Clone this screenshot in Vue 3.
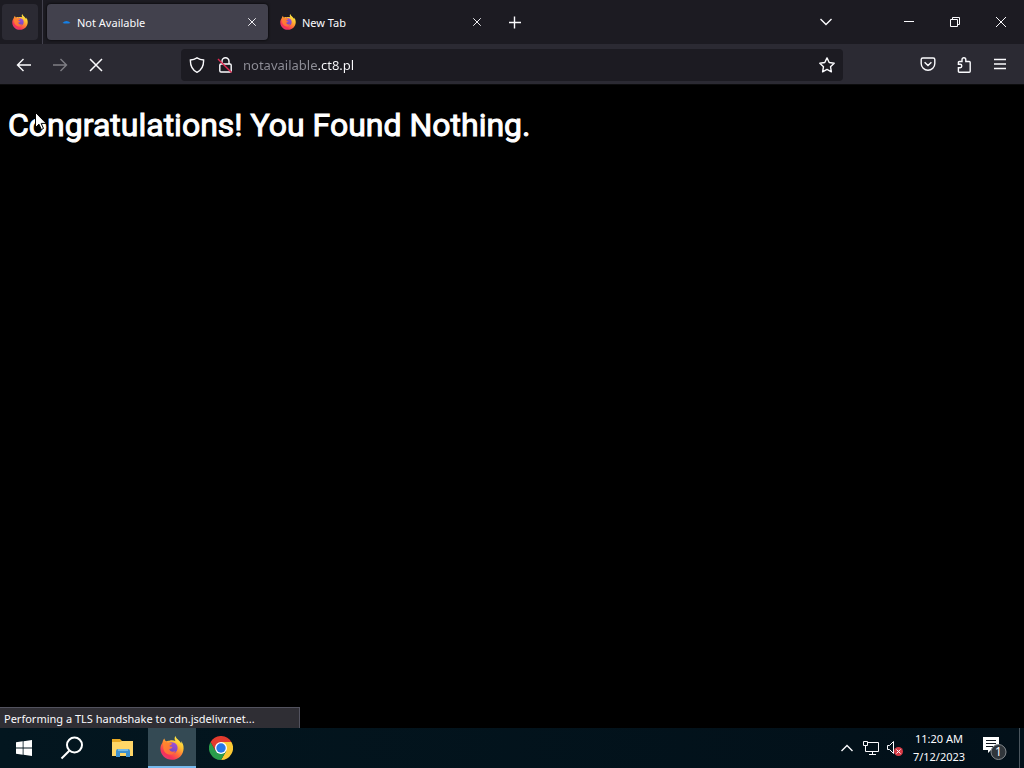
<script setup>
import { ref } from 'vue'

const address = ref('notavailable.ct8.pl')
</script>

<template>
  <div class="desktop">
    <svg class="defs" aria-hidden="true">
      <defs>
        <linearGradient id="ff-body" x1="0.85" y1="0.1" x2="0.25" y2="0.95">
          <stop offset="0" stop-color="#fff04a" />
          <stop offset="0.3" stop-color="#ffbd30" />
          <stop offset="0.58" stop-color="#ff7139" />
          <stop offset="0.85" stop-color="#f5315a" />
          <stop offset="1" stop-color="#e93a6c" />
        </linearGradient>
        <linearGradient id="ff-globe" x1="0.7" y1="0" x2="0.3" y2="1">
          <stop offset="0" stop-color="#a050d8" />
          <stop offset="1" stop-color="#6a48bd" />
        </linearGradient>
        <linearGradient id="ff-fox" x1="0" y1="0" x2="0.7" y2="1">
          <stop offset="0" stop-color="#ff8a2c" />
          <stop offset="1" stop-color="#ff6a3c" />
        </linearGradient>
        <symbol id="firefox" viewBox="0 0 24 24">
          <path fill="url(#ff-body)" d="M15.300 0c-1 2-.9 3.600.2 5-1.900-.7-4-.9-6-.3C8 4.500 7 4.800 6.200 5.300 5 4.700 4.500 3.500 4.500 2.600 3.300 3.600 2.700 5 2.600 6.400 1.100 8.300.3 10.600.4 13c.2 6.100 5.200 10.800 11.600 10.800 6.300 0 11.500-4.900 11.600-11.400.1-3-1-5.700-2.600-7.300.3 1 .4 1.800.3 2.500C19.800 4.400 16.500 3.300 15.300 0z" />
          <path fill="url(#ff-globe)" d="M8.500 7c2.800-1.500 6.200-.8 8 1.500 1.800 2.600 1.200 6-1 7.900-2.300 1.700-6 1.300-7.900-1-1.700-2.300-1.500-6 .9-8.400z" />
          <path fill="url(#ff-fox)" d="M2.600 6.400c2-.8 4.300-.5 5.900.6 1.100-.3 2.500-.2 3.600.4-.5 1.600-1.900 1.700-2.700 2.300.2 1 1.500 1.200 3.200 1-.6 1.700-2 2-3.300 2.200.5 2.600 3.500 3.700 6.200 2-1 3.300-4.800 4.600-8 3.100C4.200 16.600 3 13 3.400 10.200z" />
        </symbol>
        <symbol id="cross" viewBox="0 0 16 16">
          <path d="M2 2l12 12M14 2L2 14" fill="none" stroke="currentColor" stroke-width="1.500" />
        </symbol>
      </defs>
    </svg>

    <header class="tabs">
      <button class="pinned" aria-label="Firefox View"><svg class="i16"><use href="#firefox" /></svg></button>
      <div class="tab active">
        <svg class="i16" viewBox="0 0 16 16"><path d="M7.500 9Q11.500 5 15.500 9Q11.500 10 7.500 9z" fill="#1480e8" /></svg>
        <span class="title">Not Available</span>
        <button class="close" aria-label="Close Not Available"><svg class="i10"><use href="#cross" /></svg></button>
      </div>
      <div class="tab">
        <svg class="i16"><use href="#firefox" /></svg>
        <span class="title">New Tab</span>
        <button class="close" aria-label="Close New Tab"><svg class="i10"><use href="#cross" /></svg></button>
      </div>
      <button class="tool" aria-label="Open a new tab">
        <svg class="i16 line" viewBox="0 0 16 16"><path d="M7.500 2.500v12M2 8.500h12" /></svg>
      </button>
      <button class="tool list" aria-label="List all tabs">
        <svg class="i16 line" viewBox="0 0 16 16"><path d="M2.500 5L8 10.500 13.500 5" /></svg>
      </button>
      <div class="window">
        <button aria-label="Minimize"><svg class="i10 thin" viewBox="0 0 10 10"><path d="M0 4.500h10" /></svg></button>
        <button aria-label="Restore"><svg class="i10 thin" viewBox="0 0 10 10"><path d="M.5 2.500h7v7h-7zM2.500 2.500v-2h7v7h-2" /></svg></button>
        <button aria-label="Close"><svg class="i10 thin" viewBox="0 0 10 10"><path d="M0 0l10 10M10 0L0 10" /></svg></button>
      </div>
    </header>

    <nav class="toolbar">
      <div class="group">
        <button class="tool" aria-label="Back"><svg class="i16 line" viewBox="0 0 16 16"><path d="M15 8H1.500M7.500 2L1.500 8l6 6" /></svg></button>
        <button class="tool" aria-label="Forward" disabled><svg class="i16 line" viewBox="0 0 16 16"><path d="M1 8h13.500M8.500 2l6 6-6 6" /></svg></button>
        <button class="tool" aria-label="Stop"><svg class="i16"><use href="#cross" /></svg></button>
      </div>
      <div class="urlbar">
        <button class="small" aria-label="Tracking protection">
          <svg class="i16 line" viewBox="0 0 16 16"><path d="M8 .8c2 1.300 4.200 2 6.600 2.200C14.800 8.500 13 13 8 15.300 3 13 1.200 8.500 1.400 3 3.800 2.800 6 2.100 8 .8z" /></svg>
        </button>
        <button class="small" aria-label="Connection is not secure">
          <svg class="i16 line" viewBox="0 0 16 16"><path d="M5 7V4.200a3.500 3.500 0 0 1 7 0V7M4 7h9q1.200 0 1.200 1.200v5.600q0 1.200-1.200 1.200h-9q-1.200 0-1.200-1.200V8.200Q2.800 7 4 7z" /><path class="slash" d="M1 2l13.500 13.500" /></svg>
        </button>
        <input v-model="address" type="text" aria-label="Address" spellcheck="false">
        <button class="small" aria-label="Bookmark this page">
          <svg class="i16 line" viewBox="0 0 16 16"><path stroke-linejoin="round" d="M8 .9l2.200 4.600 5 .7-3.700 3.500.9 5.100L8 12.400l-4.400 2.400.9-5.100L.8 6.200l5-.7z" /></svg>
        </button>
      </div>
      <div class="group end">
        <button class="tool" aria-label="Save to Pocket"><svg class="i16 line" viewBox="0 0 16 16"><path d="M2.800 1h10.400q1.600 0 1.600 1.600V6.500a6.800 6.800 0 0 1-13.600 0V2.600Q1.200 1 2.800 1zM4.600 5.200L8 8.500l3.400-3.300" /></svg></button>
        <button class="tool" aria-label="Extensions"><svg class="i16 line" viewBox="0 0 16 16"><path d="M6 4.500V2.700a1.900 1.900 0 0 1 3.800 0v1.800h3.400q1 0 1 1v8.700q0 1-1 1H3.400q-1 0-1-1v-3.500h1.700a1.700 1.700 0 0 0 0-3.400H2.400V5.500q0-1 1-1z" /></svg></button>
        <button class="tool" aria-label="Menu"><svg class="i16 line" viewBox="0 0 16 16"><path d="M2 2.500h12M2 7h12M2 11.500h12" /></svg></button>
      </div>
    </nav>

    <main class="page">
      <h1>Congratulations! You Found Nothing.</h1>
      <p class="status" role="status">Performing a TLS handshake to cdn.jsdelivr.net...</p>
      <svg class="cursor" viewBox="0 0 12 19" aria-hidden="true"><path d="M.5.5v15l3.500-3.300 2.300 5.300 2.200-1-2.300-5.100h5z" fill="#fff" stroke="#000" /></svg>
    </main>

    <footer class="taskbar">
      <button class="app" aria-label="Start"><svg class="i16" viewBox="0 0 16 16"><path fill="#fff" d="M0 2.300L6.700 1.300v6.300H0zM7.500 1.200L16 0v7.600H7.500zM0 8.400h6.700v6.300L0 13.700zM7.500 8.400H16V16l-8.500-1.200z" /></svg></button>
      <button class="app" aria-label="Search"><svg class="i24" viewBox="0 0 24 24"><g fill="none" stroke="#fff" stroke-width="2"><circle cx="14.500" cy="9" r="7.500" /><path d="M9.300 14.700L1.500 22.500" /></g></svg></button>
      <div class="pins">
        <button class="app" aria-label="File Explorer">
          <svg class="i24" viewBox="0 0 24 24"><path fill="#e9a923" d="M1 3h8l2 2h11v5H1z" /><path fill="#ffd667" d="M1 6h8l2-1h11v15H1z" /><path fill="#3e91cf" d="M5 21v-6q0-2 2-2h10q2 0 2 2v6h-4v-4H9v4z" /><path fill="#74b9e6" d="M7 13h10v2H7z" /></svg>
        </button>
        <button class="app running" aria-label="Firefox"><svg class="i24"><use href="#firefox" /></svg></button>
        <button class="app" aria-label="Chrome">
          <svg class="i24" viewBox="0 0 24 24">
            <path fill="#e33b2e" d="M12 12L1.600 6A12 12 0 0 1 22.400 6z" />
            <path fill="#fcc934" d="M12 6h10.400A12 12 0 0 1 12 24l5.200-9z" />
            <path fill="#2a9d4b" d="M1.600 6A12 12 0 0 0 12 24l5.200-9H6.800z" />
            <path fill="#e33b2e" d="M1.600 6L6.800 15 12 6z" />
            <circle cx="12" cy="12" r="6" fill="#fff" /><circle cx="12" cy="12" r="4.700" fill="#2878e8" />
          </svg>
        </button>
      </div>
      <div class="tray">
        <button aria-label="Show hidden icons"><svg class="i16 line" viewBox="0 0 16 16"><path d="M2.500 11L8 5.500 13.500 11" /></svg></button>
        <button aria-label="Network"><svg class="i16 thin" viewBox="0 0 16 16"><path d="M4.500 2.500h11v9h-13v-4M9.500 11.500v3M6 14.500h7M.5 1.500h4v4h-4zM2.500 5.500v3" /></svg></button>
        <button aria-label="Volume muted"><svg class="i16 thin" viewBox="0 0 16 16"><path d="M.5 5.500h2l4-4v12l-4-4h-2z" /><circle class="mute" cx="11.500" cy="11.500" r="4.500" /><path d="M9.500 9.500l4 4M13.500 9.500l-4 4" /></svg></button>
        <time class="clock" datetime="2023-07-12T11:20"><span>11:20 AM</span><span>7/12/2023</span></time>
        <button class="notes" aria-label="1 new notification">
          <svg class="i24" viewBox="0 0 24 24"><path fill="#fff" d="M0 1h16v13H8l-3 3v-3H0z" /><path d="M3 4.500h10M3 7.500h10M3 10.500h7" stroke="#10171f" /><circle cx="15.500" cy="16" r="7.500" fill="#30363b" stroke="#858a8e" /><text x="15.500" y="20" text-anchor="middle">1</text></svg>
        </button>
      </div>
    </footer>
  </div>
</template>

<style>
body {
  background: #000;
}
</style>

<style scoped>
.desktop {
  display: flex;
  flex-direction: column;
  min-height: 100vh;
  color: #fbfbfe;
  background: #000;
  font: 11px/18px "Noto Sans", sans-serif;
}
.defs {
  position: absolute;
  width: 0;
  height: 0;
}
svg {
  display: block;
  flex: none;
}
button {
  display: flex;
  align-items: center;
  justify-content: center;
  padding: 0;
  border: 0;
  color: inherit;
  background: none;
  font: inherit;
}
.i10 { width: 10px; height: 10px; }
.i16 { width: 16px; height: 16px; }
.i24 { width: 24px; height: 24px; }
.line { fill: none; stroke: currentColor; stroke-width: 1.4; }
.thin { fill: none; stroke: currentColor; stroke-width: 1; }
.slash { stroke: #e22850; }

.tabs {
  display: flex;
  align-items: center;
  height: 44px;
  background: #1c1b22;
}
.pinned {
  position: relative;
  width: 36px;
  height: 36px;
  margin: 0 4px 0 2px;
  border-radius: 4px;
  background: #2b2a33;
}
.pinned::after {
  content: "";
  position: absolute;
  top: -4px;
  right: -5px;
  width: 1px;
  height: 44px;
  background: #42414d;
}
.tab {
  display: flex;
  align-items: center;
  gap: 6px;
  box-sizing: border-box;
  width: 221px;
  height: 36px;
  margin-right: 4px;
  padding: 0 6px 0 8px;
  border-radius: 4px;
}
.tab.active {
  background: #42414d;
  box-shadow: 0 0 3px #000;
}
.pinned + .tab {
  margin-left: 5px;
}
.title {
  flex: 1;
  padding-top: 2px;
}
.close { width: 20px; height: 24px; }
.tool { width: 36px; height: 36px; }
.tool:disabled { opacity: 0.4; }
.list { margin-left: auto; }
.window {
  display: flex;
  align-self: stretch;
  margin-left: 42px;
}
.window button { width: 46px; }

.toolbar {
  display: flex;
  align-items: center;
  box-sizing: border-box;
  height: 41px;
  padding: 1px 6px 0;
  background: #2b2a33;
  border-bottom: 1px solid #0c0c0d;
}
.group {
  display: flex;
  flex: 175 1 0;
}
.group.end {
  justify-content: flex-end;
}
.urlbar {
  display: flex;
  flex: 658 1 0;
  align-items: center;
  box-sizing: border-box;
  height: 32px;
  padding: 0 2px;
  border-radius: 4px;
  background: #1c1b22;
}
.small { width: 28px; height: 28px; }
.urlbar input {
  flex: 1;
  min-width: 0;
  padding: 0 4px;
  border: 0;
  outline: 0;
  color: transparent;
  background: linear-gradient(90deg, #8f8f98 78px, #fbfbfe 78px);
  background-clip: text;
  font: 13px/20px "Noto Sans", sans-serif;
}

.page {
  position: relative;
  display: flex;
  flex: 1;
  flex-direction: column;
  justify-content: space-between;
  align-items: flex-start;
}
h1 {
  margin: 21px 8px;
  color: #fff;
  font: 400 32px/38px Roboto, sans-serif;
  -webkit-text-stroke: 1px #fff;
}
.status {
  box-sizing: border-box;
  min-width: 300px;
  margin: 0;
  padding: 2px 4px 0;
  border: 1px solid #52525e;
  border-width: 1px 1px 0 0;
  background: #2f2e34;
}
.cursor {
  position: absolute;
  top: 27px;
  left: 35px;
  width: 12px;
  height: 19px;
}

.taskbar {
  display: flex;
  height: 40px;
  background: linear-gradient(90deg, #03161f, #021019);
}
.app { width: 48px; }
.pins {
  display: flex;
  gap: 1px;
  margin-left: 3px;
}
.app.running {
  background: #344a54;
  box-shadow: inset 0 -2px #76b9ed;
}
.tray {
  display: flex;
  margin-left: auto;
  margin-right: 4px;
  border-right: 1px solid #4b565e;
}
.tray button { width: 24px; }
.clock {
  display: flex;
  flex-direction: column;
  justify-content: center;
  width: 64px;
  text-align: center;
}
.tray .notes { width: 48px; }
.mute { fill: #d83b46; stroke: none; }
text {
  fill: #fff;
  font-size: 12px;
}
</style>
